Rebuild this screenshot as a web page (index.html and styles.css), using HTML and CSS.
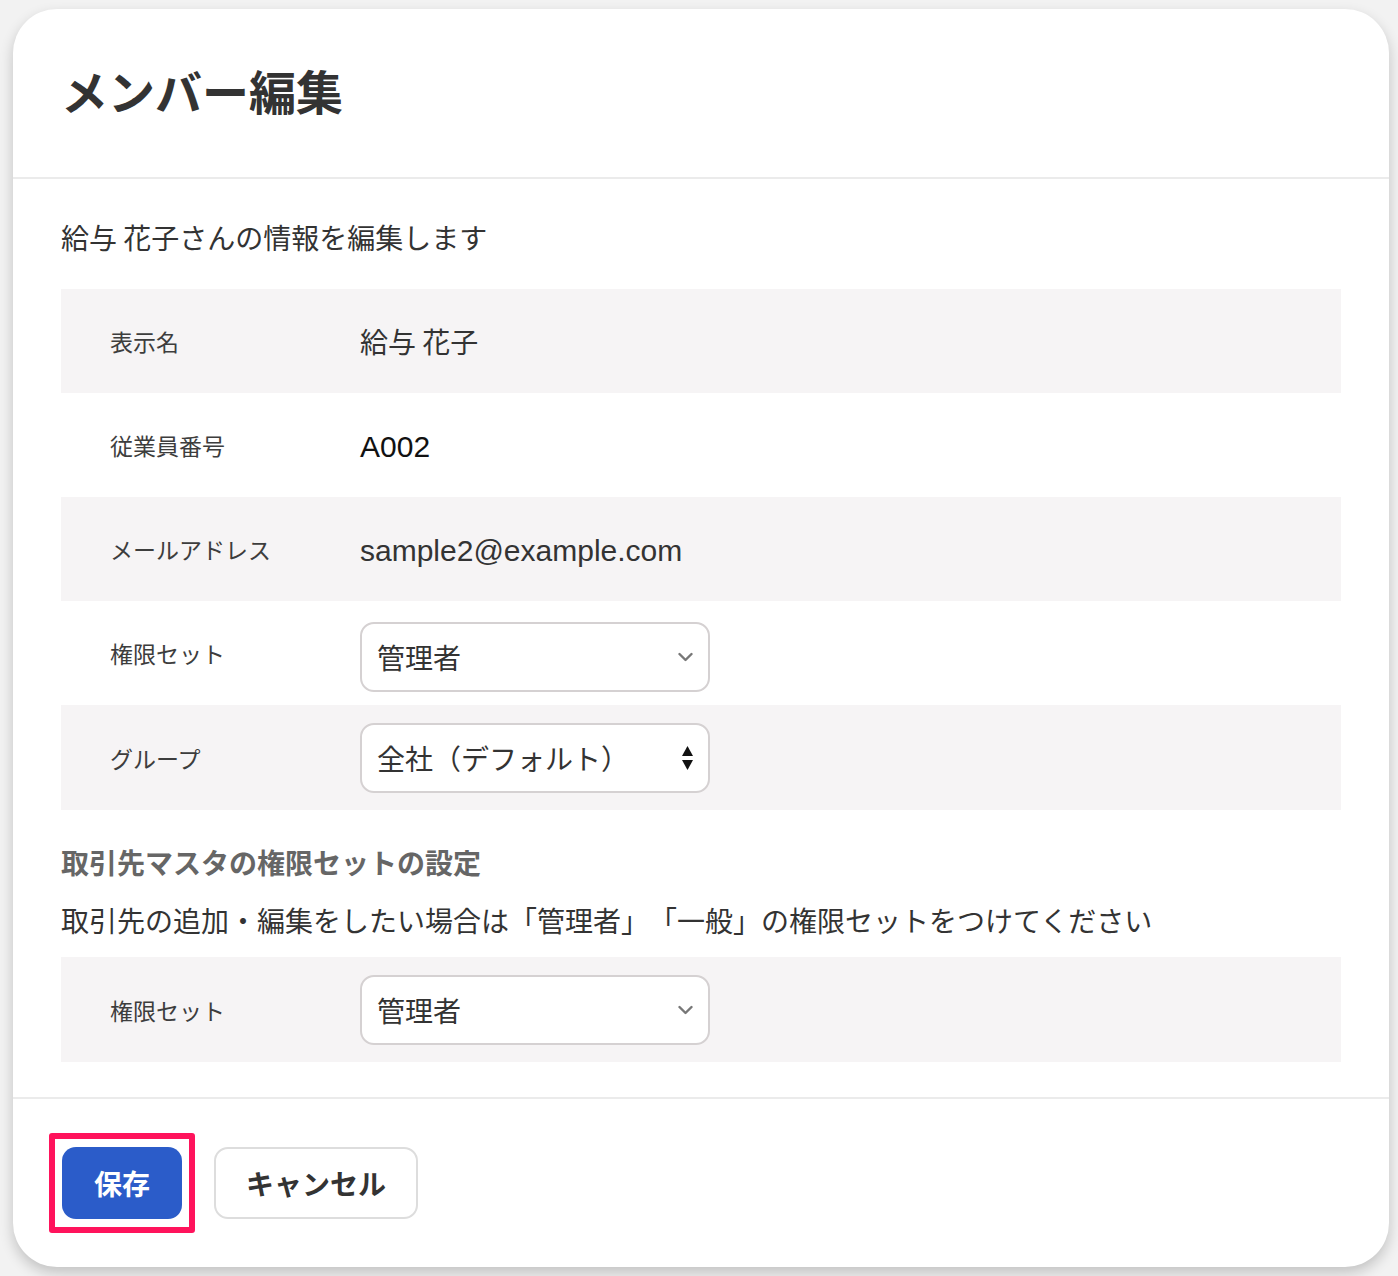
FILE: index.html
```html
<!DOCTYPE html>
<html lang="ja">
<head>
  <meta charset="UTF-8" />
  <meta name="viewport" content="width=device-width, initial-scale=1.0"/>
  <title>メンバー編集</title>
  <link rel="stylesheet" href="styles.css">
</head>
<body>
  <div class="modal">
    <div class="modal-header">
      <h1>メンバー編集</h1>
    </div>

    <div class="modal-body">
      <p class="lead">給与 花子さんの情報を編集します</p>

      <div class="fields">
        <div class="field">
          <div class="field-label">表示名</div>
          <div class="field-value">給与 花子</div>
        </div>
        <div class="field">
          <div class="field-label">従業員番号</div>
          <div class="field-value latin strong">A002</div>
        </div>
        <div class="field">
          <div class="field-label">メールアドレス</div>
          <div class="field-value latin">sample2@example.com</div>
        </div>
        <div class="field">
          <div class="field-label">権限セット</div>
          <div class="field-value">
            <div class="select select-low">
              <span>管理者</span>
              <svg class="chevron" width="15" height="10" viewBox="0 0 15 10">
                <path d="M1.5 2 L7.5 8 L13.5 2" fill="none" stroke="#777" stroke-width="2.4" stroke-linecap="round" stroke-linejoin="round"/>
              </svg>
            </div>
          </div>
        </div>
        <div class="field field-tall">
          <div class="field-label">グループ</div>
          <div class="field-value">
            <div class="select">
              <span>全社（デフォルト）</span>
              <svg class="updown" width="11" height="24" viewBox="0 0 11 24">
                <path d="M5.5 0 L11 10 L0 10 Z" fill="#111"/>
                <path d="M0 14 L11 14 L5.5 24 Z" fill="#111"/>
              </svg>
            </div>
          </div>
        </div>
      </div>

      <h2>取引先マスタの権限セットの設定</h2>
      <p class="note">取引先の追加・編集をしたい場合は「管理者」「一般」の権限セットをつけてください</p>

      <div class="fields">
        <div class="field field-tall">
          <div class="field-label">権限セット</div>
          <div class="field-value">
            <div class="select">
              <span>管理者</span>
              <svg class="chevron" width="15" height="10" viewBox="0 0 15 10">
                <path d="M1.5 2 L7.5 8 L13.5 2" fill="none" stroke="#777" stroke-width="2.4" stroke-linecap="round" stroke-linejoin="round"/>
              </svg>
            </div>
          </div>
        </div>
      </div>
    </div>

    <div class="modal-footer">
      <span class="mark">
        <button class="btn btn-primary">保存</button>
      </span>
      <button class="btn btn-default">キャンセル</button>
    </div>
  </div>
</body>
</html>
```

FILE: styles.css
```css
body {
  font-family: "Noto Sans CJK JP", sans-serif;
  background-color: #f2f2f2;
  color: #333;
  margin: 0;
  padding: 9px 9px 9px 13px;
  text-spacing-trim: space-all;
}

.modal {
  background: white;
  border-radius: 44px;
  box-shadow: 0 6px 14px rgba(0, 0, 0, 0.2);
  overflow: hidden;
}

.modal-header {
  padding: 51px 48px 57px;
  border-bottom: 2px solid #ebebeb;
}

h1 {
  margin: 0;
  font-size: 47px;
  line-height: 60px;
  font-weight: 700;
  color: #333;
}

.modal-body {
  padding: 37px 48px 35px;
}

.lead {
  margin: 0 0 31px;
  font-size: 28px;
  line-height: 42px;
}

.fields {
  display: flex;
  flex-direction: column;
}

.field {
  display: grid;
  grid-template-columns: 250px 1fr;
  align-items: center;
  height: 104px;
  padding-left: 49px;
}

.field-tall {
  height: 105px;
}

.field:nth-child(odd) {
  background: #f6f4f5;
}

.field-label {
  font-size: 23px;
  color: #3d3d3d;
}

.field-value {
  font-size: 28px;
  color: #333;
}

.field-value.latin {
  font-family: "Liberation Sans", "Noto Sans CJK JP", sans-serif;
  font-size: 30px;
  padding-top: 4px;
}

.field-value.strong {
  color: #111;
}

.select {
  width: 350px;
  height: 70px;
  box-sizing: border-box;
  border: 2px solid #d5d1d2;
  border-radius: 14px;
  background: white;
  padding: 0 15px;
  display: flex;
  align-items: center;
  justify-content: space-between;
  font-size: 28px;
  color: #333;
}

.select-low {
  margin-top: 8px;
}

h2 {
  margin: 31px 0 16px;
  font-size: 28px;
  line-height: 42px;
  font-weight: 700;
  color: #666;
}

.note {
  margin: 0 0 16px;
  font-size: 28px;
  line-height: 42px;
}

.modal-footer {
  border-top: 2px solid #ebebeb;
  padding: 34px 36px;
  display: flex;
  align-items: center;
  gap: 19px;
}

.mark {
  display: flex;
  border: 6px solid #ff135c;
  border-radius: 3px;
  padding: 8px 7px;
}

.btn {
  font-family: "Noto Sans CJK JP", sans-serif;
  font-size: 28px;
  font-weight: 700;
  height: 72px;
  border-radius: 14px;
  cursor: pointer;
}

.btn-primary {
  width: 120px;
  background: #2b5cc9;
  border: none;
  color: white;
}

.btn-default {
  width: 204px;
  background: white;
  border: 2px solid #dddddd;
  color: #333;
}
```
